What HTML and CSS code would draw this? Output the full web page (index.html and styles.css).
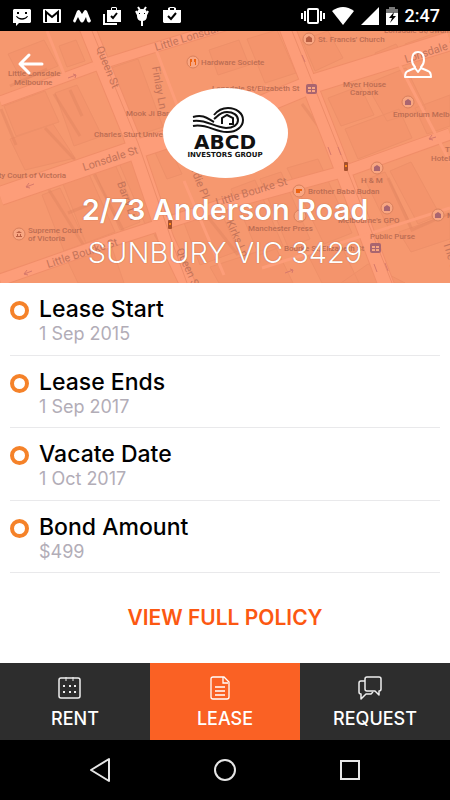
FILE: index.html
```html
<!DOCTYPE html>
<html lang="en">
<head>
    <meta charset="UTF-8">
    <meta name="viewport" content="width=device-width, initial-scale=1.0">
    <title>Lease</title>
    <link rel="stylesheet" href="styles.css">
</head>
<body>

    <div class="status-bar">
        <div class="status-left">
            <svg width="20" height="20" viewBox="0 0 20 20"><path fill="#fff" fill-rule="evenodd" d="M2 3h16l1 1v12l-1 1H7l-3 3v-3H1V4zM5 6v2h2V6zm8 0v2h2V6zM4 10c2 5 10 5 12 0h-1c-2 3-8 3-10 0z"/></svg>
            <svg width="20" height="20" viewBox="0 0 20 20"><rect x="1" y="3" width="18" height="14" rx="1" fill="#fff"/><path d="M4 16V6l6 5 6-5v10" fill="none" stroke="#000" stroke-width="2"/></svg>
            <svg width="20" height="20" viewBox="0 0 20 20"><path fill="#fff" d="M1 15 5 5q2-2 3 0l2 3 2-3q1-2 3 0l4 10q-2 3-4 0l-1-4-2 4q-2 3-4 0l-2-4-2 4q-1 3-3 0z"/></svg>
            <svg width="20" height="20" viewBox="0 0 20 20"><path fill="#fff" fill-rule="evenodd" d="M5 4h4V2l1-1h4l1 1v2h4v12H5zm5 0h4V2h-4z"/><path d="M2 8v10h13" fill="none" stroke="#fff" stroke-width="2"/><path d="m9 10 2 2 4-5" fill="none" stroke="#000" stroke-width="2"/></svg>
            <svg width="20" height="20" viewBox="0 0 20 20"><path d="m6 1 2 3M14 1l-2 3M10 14v6M4 5l2 4M16 5l-2 4" stroke="#fff" stroke-width="2"/><path d="M5 7q0-4 5-4t5 4v3q0 5-5 5t-5-5z" fill="#fff"/><path d="M7 7h1v1H7zM12 7h1v1h-1z"/></svg>
            <svg width="20" height="20" viewBox="0 0 20 20"><path fill="#fff" fill-rule="evenodd" d="M1 4h5V2l2-1h4l2 1v2h5v12l-1 1H2l-1-1zm7 0h4V2H8z"/><path d="m6 10 3 3 5-6" fill="none" stroke="#000" stroke-width="2"/></svg>
        </div>
        <div class="status-right">
            <svg width="24" height="18" viewBox="0 0 24 18"><rect x="7" y="2" width="10" height="14" rx="1" fill="none" stroke="#fff" stroke-width="2"/><path d="M4 4v10M1 6v6M20 4v10M23 6v6" stroke="#fff" stroke-width="2"/></svg>
            <svg width="22" height="18" viewBox="0 0 22 18"><path fill="#fff" d="M0 4q11-8 22 0L11 18z"/></svg>
            <svg width="18" height="18" viewBox="0 0 18 18"><path fill="#fff" d="M18 0v18H0z"/></svg>
            <svg width="12" height="18" viewBox="0 0 12 18"><path fill="#777" d="M0 2h3V0h6v2h3v4H0z"/><path fill="#fff" d="M0 6h12v12H0z"/><path d="M8 5 3 11h3l-2 5 6-7H7z"/></svg>
            <span class="clock">2:47</span>
        </div>
    </div>

    <header class="hero">
        <svg class="map" viewBox="0 31 450 252" preserveAspectRatio="xMidYMid slice" aria-hidden="true">
            <rect y="31" width="450" height="252" fill="#f6986f"/>
            <!-- buildings -->
            <g fill="#f4946c" stroke="#ee9069">
                <path d="m8 54 36-14 14 26-36 15zM59 46l17-6 9 21-18 6zM4 106l41-15 14 31-43 14zM55 93l22-8 25 51-28 10zM10 139l43-15 22 34-50 12zM108 69l30-10 25 68-31 10z"/>
                <path d="m63 184 26-10 26 58-29 11zM94 170l20-8 26 60-20 8zM119 163l15-5 27 58-16 8zM154 150l14-6 14 30-15 5zM42 195l18-7 26 55-22 8zM209 50l30-10 10 25-31 10zM247 39l30-9 19 43-31 10z"/>
                <path d="m302 40 26-9 15 27-28 13zM375 53l21-9 10 17-23 9zM405 44l36-13 9 20-35 10zM328 98l32-12 14 29-33 11zM366 84l40-16 20 41-39 12zM345 129l54-20 13 29-54 21zM415 108l35-13v31l-23 8z"/>
                <path d="m231 189 24-9 28 66-24 9zM260 179l21-7 29 67-22 8zM287 168l31-9 34 74-28 11zM365 180l20-8 24 48-20 9zM390 171l21-9 29 53-22 9zM399 232l51-18v25l-39 13zM183 220l36-13 19 44-38 14zM210 267l65-21 18 37h-74zM307 253l32-12 20 42h-37zM341 283l27-19 37 19zM68 262l43-17 13 38H78z"/>
            </g>
            <g fill="none" stroke="#df815e" stroke-width="3" opacity=".4">
                <path d="m10 86 37-17M54 94l26 42M70 90l12 26M45 128l30 32M68 213l30-12M94 174l32 62M49 190l37 59M302 104l31 42M388 178l24 52 38-17M155 234l27 48M208 217l30 38M1 109l15 36"/>
            </g>
            <!-- streets -->
            <g fill="none" stroke="#f08e69">
                <path stroke-width="11" d="m0 101 93-34 57-18 75-23"/>
                <path stroke-width="17" d="m84 20 46 113 36 106 24 50M284 20l51 130 55 145"/>
                <path stroke-width="20" d="m0 196 140-48 85-28 87-36 138-43"/>
                <path stroke-width="13" d="m0 280 117-41 108-35 127-35 98-35"/>
            </g>
            <g fill="none" stroke="#fd9d79">
                <path stroke-width="9" d="m0 101 93-34 57-18 75-23"/>
                <path stroke-width="15" d="m84 20 46 113 36 106 24 50M284 20l51 130 55 145"/>
                <path stroke-width="18" d="m0 196 140-48 85-28 87-36 138-43"/>
                <path stroke-width="11" d="m0 280 117-41 108-35 127-35 98-35"/>
                <path stroke-width="3" d="m155 47 22 58M47 31l17 43M151 202l11 28M231 99l37-13M184 181l40 94M399 64l51 98M262 268l188-60"/>
            </g>
            <g fill="none" stroke="#ed8d69">
                <path d="m92 31 46 112 37 107 12 33M292 31l50 126 50 126"/>
            </g>
            <g class="arrows">
                <path d="m68 78 8-3M73 74l3 1-1 3M302 55l3 7M26 187l8-3M29 183l-3 4 4 1M24 274l8-3M27 270l-3 4 4 1M331 155l-3-8M338 147l3 8M285 273l8-3M290 269l3 1-1 3M377 272l-3-8M385 263l3 8M429 139l7-2M432 135l-3 4 4 1"/>
            </g>
            <!-- places -->
            <g fill="#f9a682" stroke="#d9805c">
                <circle cx="193" cy="62" r="6"/><circle cx="309" cy="39" r="6"/><circle cx="408" cy="102" r="6"/>
                <circle cx="19" cy="234" r="6"/><circle cx="377" cy="168" r="6"/><circle cx="299" cy="191" r="6"/>
                <circle cx="300" cy="216" r="6"/><circle cx="387" cy="208" r="6"/><circle cx="438" cy="215" r="6"/>
            </g>
            <path fill="#ec6412" d="M190 59h2v3h-1v4h-1zM194 59h2v6h-1v-3h-1zM296 189h6v2h-2v2h-4z"/>
            <path fill="#b95e42" d="M306 42v-4l3-2 3 2v4zM16 237v-1h6v1zM16 233l3-2 3 2zM17 234h1v2h-1zM20 234h1v2h-1z"/>
            <g fill="#a96570">
                <path d="M405 105v-4l3-2 3 2v4zM374 171v-4l3-2 3 2v4zM384 211v-4l3-2 3 2v4zM435 218v-4l3-2 3 2v4z"/>
                <rect x="306" y="84" width="11" height="10" rx="2"/><rect x="370" y="243" width="11" height="10" rx="2"/>
            </g>
            <path d="M308 87h3v2h-3zM312 87h3v2h-3zM308 90h3v2h-3zM312 90h3v2h-3zM372 246h3v2h-3zM376 246h3v2h-3zM372 249h3v2h-3zM376 249h3v2h-3z" fill="#f9a682"/>
            <g>
                <rect x="168" y="220" width="4" height="9" rx="1" fill="#a5502d"/><path fill="#ff8b1c" d="M169 223h2v2h-2z"/>
                <rect x="344" y="162" width="4" height="9" rx="1" fill="#a5502d"/><path fill="#ff8b1c" d="M345 165h2v2h-2z"/>
            </g>
            <g class="map-text">
                <text x="8" y="76">Little Lonsdale</text>
                <text x="14" y="85">Melbourne</text>
                <text x="201" y="65">Hardware Societe</text>
                <text x="318" y="42">St. Francis' Church</text>
                <text x="384" y="33">Lonsdale St/Swanston</text>
                <text x="212" y="91">Lonsdale St/Elizabeth St</text>
                <text x="343" y="87">Myer House</text>
                <text x="350" y="95">Carpark</text>
                <text x="393" y="117">Emporium Melbourne</text>
                <text x="126" y="116">Mook Ji Bar</text>
                <text x="94" y="137">Charles Sturt University</text>
                <text x="-20" y="178">County Court of Victoria</text>
                <text x="28" y="233">Supreme Court</text>
                <text x="28" y="241">of Victoria</text>
                <text x="445" y="152">The</text>
                <text x="431" y="161">Hotel</text>
                <text x="361" y="183">H &amp; M</text>
                <text x="308" y="194">Brother Baba Budan</text>
                <text x="338" y="223">Melbourne's GPO</text>
                <text x="248" y="231">Manchester Press</text>
                <text x="370" y="239">Public Purse</text>
                <text x="284" y="251">Bourke St/Elizabeth St</text>
                <text x="447" y="218">Myer</text>
            </g>
            <g class="street-text">
                <text transform="translate(156 51) rotate(-17)">Little Lonsdale St</text>
                <text transform="translate(96 48) rotate(68)">Queen St</text>
                <text transform="translate(152 67) rotate(80)">Finlay Ln</text>
                <text transform="translate(84 171) rotate(-18)">Lonsdale St</text>
                <text transform="translate(406 63) rotate(-18)">Lonsdale St</text>
                <text transform="translate(117 183) rotate(70)">Barry Ln</text>
                <text transform="translate(186 158) rotate(68)">Hardie Pl</text>
                <text transform="translate(48 268) rotate(-18)">Little Bourke St</text>
                <text transform="translate(217 206) rotate(-17)">Little Bourke St</text>
                <text transform="translate(176 250) rotate(66)">Queen St</text>
                <text transform="translate(226 222) rotate(66)">Kirks Ln</text>
                <text transform="translate(443 243) rotate(73)">The Causeway</text>
            </g>
        </svg>
        <button class="back" aria-label="Back">
            <svg width="28" height="24" viewBox="0 0 28 24"><path d="M12 3 3 12l9 9M3 12h22" fill="none" stroke="#fff" stroke-width="3" stroke-linecap="round" stroke-linejoin="round"/></svg>
        </button>
        <button class="profile" aria-label="Profile">
            <svg width="28" height="28" viewBox="0 0 28 28"><path d="M11 17q-3-3-3-7 0-8 6-8t6 8q0 4-3 7v1l7 3q3 1 3 6H1q0-5 3-6l7-3zM11 18l3 4 3-4" fill="none" stroke="#fff" stroke-width="2" stroke-linejoin="round"/></svg>
        </button>
        <div class="logo">
            <svg class="logo-mark" width="54" height="27" viewBox="0 0 54 27" fill="none" stroke="#111" stroke-width="2">
                <path d="M22 8C26 3 31 1 36 1c8 0 15 5 15 12s-7 12-15 12C24 26 15 16 1 19"/>
                <path d="M1 14c13-2 20 6 33 7 7 0 12-3 12-8s-5-8-11-8c-7 0-9 4-13 7"/>
                <path d="M1 10c11-3 15 2 21 5"/>
                <path d="M30 17v-6l5-3 6 3v6h-4"/>
            </svg>
            <span class="logo-name">ABCD</span>
            <span class="logo-sub">INVESTORS GROUP</span>
        </div>
        <h1>2/73 Anderson Road</h1>
        <p class="suburb">SUNBURY VIC 3429</p>
    </header>

    <main>
        <ul class="details">
            <li><span class="dot"></span><div><h2>Lease Start</h2><p>1 Sep 2015</p></div></li>
            <li><span class="dot"></span><div><h2>Lease Ends</h2><p>1 Sep 2017</p></div></li>
            <li><span class="dot"></span><div><h2>Vacate Date</h2><p>1 Oct 2017</p></div></li>
            <li><span class="dot"></span><div><h2>Bond Amount</h2><p>$499</p></div></li>
        </ul>
        <a class="policy" href="#">VIEW FULL POLICY</a>
    </main>

    <nav class="tabs">
        <a href="#">
            <svg width="24" height="24" viewBox="0 0 24 24"><rect x="1" y="2" width="21" height="20" rx="2" fill="none" stroke="#eee" stroke-width="1.5"/><path d="M8 1v4M15 1v4" stroke="#eee"/><path fill="#eee" d="M5 9h2v2H5zM11 9h2v2h-2zM16 9h2v2h-2zM5 15h2v2H5zM11 15h2v2h-2zM16 15h2v2h-2z"/></svg>
            RENT
        </a>
        <a href="#" class="active">
            <svg width="24" height="24" viewBox="0 0 24 24" fill="none" stroke="#fff" stroke-width="1.3"><path d="M5 1h11l5 5v15q0 2-2 2H5q-2 0-2-2V3q0-2 2-2M15 1v6h5M7 11h10M7 15h10M7 19h10"/></svg>
            LEASE
        </a>
        <a href="#">
            <svg width="24" height="24" viewBox="0 0 24 24" fill="none" stroke="#eee" stroke-width="1.5" stroke-linejoin="round"><path d="M9 1h12q2 0 2 2v10q0 2-2 2v4l-4-4H9q-2 0-2-2V3q0-2 2-2z"/><path d="M7 5H3Q1 5 1 7v9q0 2 2 2v5l5-5h5l2-2"/></svg>
            REQUEST
        </a>
    </nav>

    <div class="nav-bar">
        <button aria-label="Back"><svg width="24" height="26" viewBox="0 0 24 26"><path d="M21 2v22L3 13z" fill="none" stroke="#e6e6e6" stroke-width="2" stroke-linejoin="round"/></svg></button>
        <button aria-label="Home"><svg width="24" height="26" viewBox="0 0 24 26"><circle cx="12" cy="13" r="10" fill="none" stroke="#e6e6e6" stroke-width="2"/></svg></button>
        <button aria-label="Recent apps"><svg width="24" height="26" viewBox="0 0 24 26"><rect x="3" y="4" width="18" height="18" fill="none" stroke="#e6e6e6" stroke-width="2"/></svg></button>
    </div>

</body>
</html>
```
FILE: styles.css
```css
* { box-sizing: border-box; margin: 0; padding: 0; }
body { display: flex; flex-direction: column; min-height: 100vh; font-family: Inter, "Liberation Sans", sans-serif; background: #fff; color: #000; }
button { background: none; border: 0; cursor: pointer; }
svg { display: block; }
a { text-decoration: none; }

.status-bar { display: flex; justify-content: space-between; align-items: center; height: 31px; padding: 0 10px 0 12px; background: #000; color: #fff; }
.status-left { display: flex; gap: 10px; }
.status-right { display: flex; align-items: center; gap: 7px; }
.clock { font: 500 18px/24px Roboto, sans-serif; }

.hero { position: relative; display: flex; flex-direction: column; align-items: center; padding: 57px 16px 12px; color: #fff; text-align: center; }
.map { position: absolute; top: 0; left: 0; width: 100%; height: 100%; z-index: -1; }
.map-text { font: 500 8px Roboto, sans-serif; fill: #bb6d53; }
.street-text { font: 11px Roboto, sans-serif; fill: #c4745a; }
.arrows { fill: none; stroke: #d7796b; stroke-width: 1; }
.back, .profile { position: absolute; top: 21px; }
.back { left: 17px; }
.profile { top: 19px; right: 18px; }

.logo { display: flex; flex-direction: column; align-items: center; width: 125px; height: 90px; padding-top: 19px; border-radius: 50%; background: #fff; color: #111; font-family: "DejaVu Sans", sans-serif; font-weight: bold; }
.logo-mark { margin-right: 12px; }
.logo-name { font-size: 20px; line-height: 17px; }
.logo-sub { font-size: 7px; line-height: 8px; }

h1 { margin-top: 14px; font-size: 29px; line-height: 36px; font-weight: 600; text-shadow: 0 0 1px rgba(120,50,20,0.7); }
.suburb { margin-top: 7px; font-size: 29px; line-height: 36px; font-weight: 300; text-shadow: 0 0 1px rgba(120,50,20,0.7); }

main { flex: 1; display: flex; flex-direction: column; }
.details { display: grid; grid-auto-rows: 1fr; min-height: 290px; padding: 0 10px; list-style: none; }
.details li { display: flex; gap: 10px; padding-top: 13px; border-bottom: 1px solid #e9e9eb; }
.dot { width: 19px; height: 19px; margin-top: 5px; border: 4px solid #f58229; border-radius: 50%; }
.details h2 { font-size: 23px; line-height: 26px; font-weight: 500; }
.details p { font-size: 18px; line-height: 24px; color: #b2adb7; font-weight: 400; }
.policy { margin: auto; font-size: 21px; line-height: 28px; font-weight: 600; color: #fc5812; }

.tabs { display: grid; grid-template-columns: repeat(3, 1fr); }
.tabs a { display: flex; flex-direction: column; align-items: center; gap: 7px; height: 77px; padding-top: 13px; background: #2d2d2d; color: #fff; font-size: 18px; line-height: 24px; font-weight: 500; }
.tabs svg { margin-right: 10px; }
.tabs .active { background: #fa6124; }

.nav-bar { display: flex; justify-content: center; align-items: center; gap: 101px; height: 60px; background: #000; }
```
